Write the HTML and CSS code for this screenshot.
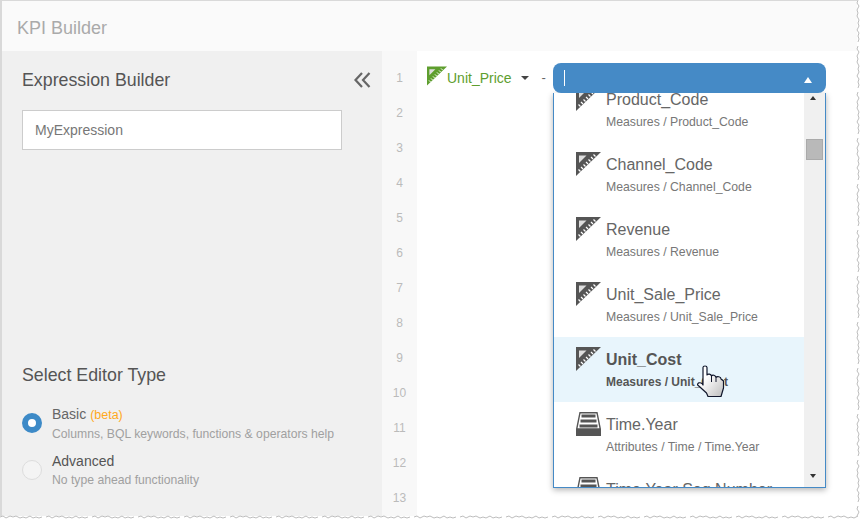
FILE: index.html
```html
<!DOCTYPE html>
<html lang="en">
<head>
<meta charset="utf-8">
<title>KPI Builder</title>
<link rel="stylesheet" href="styles.css">
</head>
<body>
<svg class="defs" width="0" height="0" aria-hidden="true">
  <symbol id="ruler" viewBox="0 0 25 24">
    <path d="M0 0H25L0 24Z" fill="currentColor"/>
    <path d="M3 3.500H10.500L3 11Z" fill="#dedede"/>
    <path d="M17.500 2.500l2 2M15 5l2 2M12.500 7.500l2 2M10 10l2 2M7.500 12.500l2 2M5 15l2 2M2.500 17.500l2 2" stroke="#fff" stroke-width="1.200" fill="none"/>
  </symbol>
  <symbol id="table" viewBox="0 0 25 24">
    <path d="M4 .7H21L24.300 17H.7Z" fill="#fff" stroke="#555" stroke-width="1.400"/>
    <rect x="5.500" y="2.500" width="14" height="3" fill="#555"/>
    <rect x="4.500" y="7.500" width="16" height="3" fill="#555"/>
    <rect x="3.500" y="12.500" width="18" height="3" fill="#555"/>
    <rect x="0" y="17" width="25" height="7" fill="#555"/>
  </symbol>
</svg>
<div class="window">
  <header class="title">KPI Builder</header>
  <div class="body">
    <aside class="side">
      <div class="side-head">
        <h2 class="h">Expression Builder</h2>
        <svg class="collapse" width="18" height="16" viewBox="0 0 18 16"><path d="M9 1 2.500 8 9 15M16.500 1 10 8l6.500 7" fill="none" stroke="#666" stroke-width="2.200"/></svg>
      </div>
      <div class="name-input">MyExpression</div>
      <div class="editor-type">
        <h2 class="h">Select Editor Type</h2>
        <div class="opt">
          <span class="radio on"></span>
          <div><div class="opt-t">Basic <span class="beta">(beta)</span></div><div class="opt-s">Columns, BQL keywords, functions &amp; operators help</div></div>
        </div>
        <div class="opt opt2">
          <span class="radio"></span>
          <div><div class="opt-t">Advanced</div><div class="opt-s">No type ahead functionality</div></div>
        </div>
      </div>
    </aside>
    <div class="gutter">
      <span>1</span><span>2</span><span>3</span><span>4</span><span>5</span><span>6</span><span>7</span><span>8</span><span>9</span><span>10</span><span>11</span><span>12</span><span>13</span>
    </div>
    <main class="editor">
      <div class="token">
        <svg class="tok-ic"><use href="#ruler"/></svg>
        <span class="tok-name">Unit_Price</span>
        <span class="caret"></span>
        <span class="minus">-</span>
      </div>
      <div class="combo">
        <div class="combo-head"><span class="cursor"></span><span class="up"></span></div>
        <div class="combo-list">
          <div class="items">
            <div class="item"><svg class="ic"><use href="#ruler"/></svg><div><div class="n">Product_Code</div><div class="p">Measures / Product_Code</div></div></div>
            <div class="item"><svg class="ic"><use href="#ruler"/></svg><div><div class="n">Channel_Code</div><div class="p">Measures / Channel_Code</div></div></div>
            <div class="item"><svg class="ic"><use href="#ruler"/></svg><div><div class="n">Revenue</div><div class="p">Measures / Revenue</div></div></div>
            <div class="item"><svg class="ic"><use href="#ruler"/></svg><div><div class="n">Unit_Sale_Price</div><div class="p">Measures / Unit_Sale_Price</div></div></div>
            <div class="item hot"><svg class="ic"><use href="#ruler"/></svg><div><div class="n">Unit_Cost</div><div class="p">Measures / Unit_Cost</div></div></div>
            <div class="item"><svg class="ic"><use href="#table"/></svg><div><div class="n">Time.Year</div><div class="p">Attributes / Time / Time.Year</div></div></div>
            <div class="item"><svg class="ic"><use href="#table"/></svg><div><div class="n">Time.Year Seq Number</div><div class="p">Attributes / Time / Time.Year Seq Number</div></div></div>
          </div>
          <div class="sb"><span class="sb-up"></span><span class="sb-th"></span><span class="sb-dn"></span></div>
        </div>
      </div>
    </main>
  </div>
</div>
<svg class="hand" width="28" height="33" viewBox="0 0 28 33">
  <defs><linearGradient id="hg" x1="0" y1="0" x2="1" y2="1"><stop offset=".35" stop-color="#fff"/><stop offset="1" stop-color="#bcbcbc"/></linearGradient></defs>
  <path d="M6 2.500C6 .5 10 .5 10 2.500V10C11 8.500 14 9 14.500 11C15.500 9.500 18.500 10 19 12.500C20 11 24 11.500 24 14L26.500 16V23L24 31.500H11L9.500 28 .7 20C0 18 3 17 5 18.500L6 20Z" fill="url(#hg)" stroke="#10162b" stroke-width="1.200" stroke-linejoin="round"/>
  <path d="M14.500 11V17M19 12.500V17" fill="none" stroke="#10162b" stroke-width="1"/>
</svg>
<svg class="torn" width="861" height="522" aria-hidden="true">
  <defs>
    <pattern id="th" width="46" height="8" patternUnits="userSpaceOnUse" patternTransform="translate(0 512)">
      <path d="M0 5l3-1 3 2 4-2 3 1 3-1 4 2 3-1 3 1 4-2 3 2 3-1 3 1 3-1V8H0Z" fill="#fff"/>
      <path d="M0 5l3-1 3 2 4-2 3 1 3-1 4 2 3-1 3 1 4-2 3 2 3-1 3 1 3-1" fill="none" stroke="#bdbdbd"/>
    </pattern>
    <pattern id="tv" width="8" height="46" patternUnits="userSpaceOnUse" patternTransform="translate(855 0)">
      <path d="M3 0l-1 3 2 3-2 4 1 3-1 3 2 4-1 3 1 3-2 4 2 3-1 3 1 3-1 3" fill="none" stroke="#bdbdbd"/>
    </pattern>
  </defs>
  <rect x="855" y="0" width="6" height="517" fill="url(#tv)"/>
  <rect x="0" y="512" width="858" height="8" fill="url(#th)"/>
  <rect x="0" y="520" width="861" height="2" fill="#fff"/>
</svg>
</body>
</html>
```
FILE: styles.css
```css
* { box-sizing: border-box; }
html, body { margin: 0; padding: 0; }
body {
  width: 861px; height: 522px; overflow: hidden; background: #fff;
  font-family: "Liberation Sans", Arial, sans-serif; color: #555; position: relative;
}
.defs { position: absolute; }
.window {
  width: 857px; height: 516px;
  border-top: 1px solid #d9d9d9; border-left: 2px solid #d9d9d9;
  display: flex; flex-direction: column;
}
.title {
  height: 50px; flex: none; background: #fafafa; color: #aaa;
  font-size: 18px; line-height: 55px; padding-left: 15px;
}
.body { flex: 1; display: flex; min-height: 0; }
.side {
  width: 380px; flex: none; background: #f0f0f0; padding: 0 20px;
  display: flex; flex-direction: column;
}
.h { margin: 0; font-size: 17.800px; font-weight: 400; color: #555; line-height: 20px; }
.side-head { display: flex; justify-content: space-between; align-items: center; height: 20px; margin-top: 19px; }
.collapse { margin-right: -9px; }
.name-input {
  width: 320px; height: 40px; margin-top: 20px; background: #fff;
  border: 1px solid #ccc; padding-left: 12px; line-height: 38px; font-size: 14px; color: #777;
}
.editor-type { margin-top: 215px; }
.opt { display: flex; margin-top: 21px; gap: 10px; }
.opt2 { margin-top: 12px; }
.radio {
  width: 20px; height: 20px; border-radius: 50%; margin-top: 7px; flex: none;
  background: #f4f4f4; border: 1px solid #ddd;
}
.radio.on { background: #fff; border: 6px solid #3d8ac7; }
.opt-t { font-size: 14px; line-height: 16px; color: #666; }
.opt2 .opt-t { color: #555; }
.beta { color: #ffa81c; font-size: 12.500px; }
.opt-s { font-size: 12.200px; line-height: 14px; color: #a0a0a0; margin-top: 4px; }
.gutter {
  width: 35px; flex: none; background: #f8f8f8; padding-top: 10px;
  display: flex; flex-direction: column; align-items: center;
  font-size: 12px; color: #bbb;
}
.gutter span { height: 35px; line-height: 35px; flex: none; }
.editor { flex: 1; display: flex; background: #fff; padding: 12px 0 0 10px; min-width: 0; }
.token { display: flex; align-items: flex-start; width: 126px; flex: none; color: #5e9e2e; }
.tok-ic { width: 20px; height: 20px; color: #5e9e2e; flex: none; margin-top: 3px; }
.tok-name { font-size: 14px; line-height: 30px; }
.caret { width: 0; height: 0; border: 4px solid transparent; border-top: 4px solid #444; margin: 13px 0 0 9px; }
.minus { font-size: 13px; line-height: 30px; color: #666; margin-left: 13px; }
.combo { width: 273px; flex: none; position: relative; height: 425px; }
.combo-head {
  height: 30px; background: #458ac6; border-radius: 8px; position: relative; z-index: 1;
  display: flex; align-items: center; justify-content: space-between; padding: 0 14px 0 11px;
}
.cursor { width: 1px; height: 16px; background: #fff; }
.up { width: 0; height: 0; border: 4.500px solid transparent; border-bottom: 6px solid #fff; border-top: 0; margin-top: 4px; }
.combo-list {
  height: 395px; background: #fff; border: 1px solid #458ac6; border-top: 0;
  box-shadow: 0 2px 6px rgba(0,0,0,.3); overflow: hidden; display: flex;
}
.items { flex: 1; margin-top: -16px; min-width: 0; }
.item { height: 65px; display: flex; padding: 13px 0 0 22px; gap: 5px; }
.ic { width: 25px; height: 24px; flex: none; color: #555; margin-top: -3px; }
.n { font-size: 16px; line-height: 20px; color: #666; }
.p { font-size: 12.250px; line-height: 14px; color: #777; margin-top: 5px; }
.hot { background: #e8f5fc; }
.hot .n, .hot .p { font-weight: 700; color: #555; }
.hot .p { font-size: 12px; }
.sb { width: 21px; flex: none; background: #f0f0f0; position: relative; }
.sb-up, .sb-dn { position: absolute; left: 6px; width: 0; height: 0; border: 3.500px solid transparent; }
.sb-up { top: 3px; border-bottom: 4px solid #333; border-top: 0; }
.sb-dn { bottom: 9px; border-top: 4px solid #333; border-bottom: 0; }
.sb-th { position: absolute; left: 2px; top: 46px; width: 17px; height: 21px; background: #b9b9b9; border: 1px solid #aaa; }
.hand { position: absolute; left: 697px; top: 365px; }
.torn { position: absolute; left: 0; top: 0; pointer-events: none; }
```
